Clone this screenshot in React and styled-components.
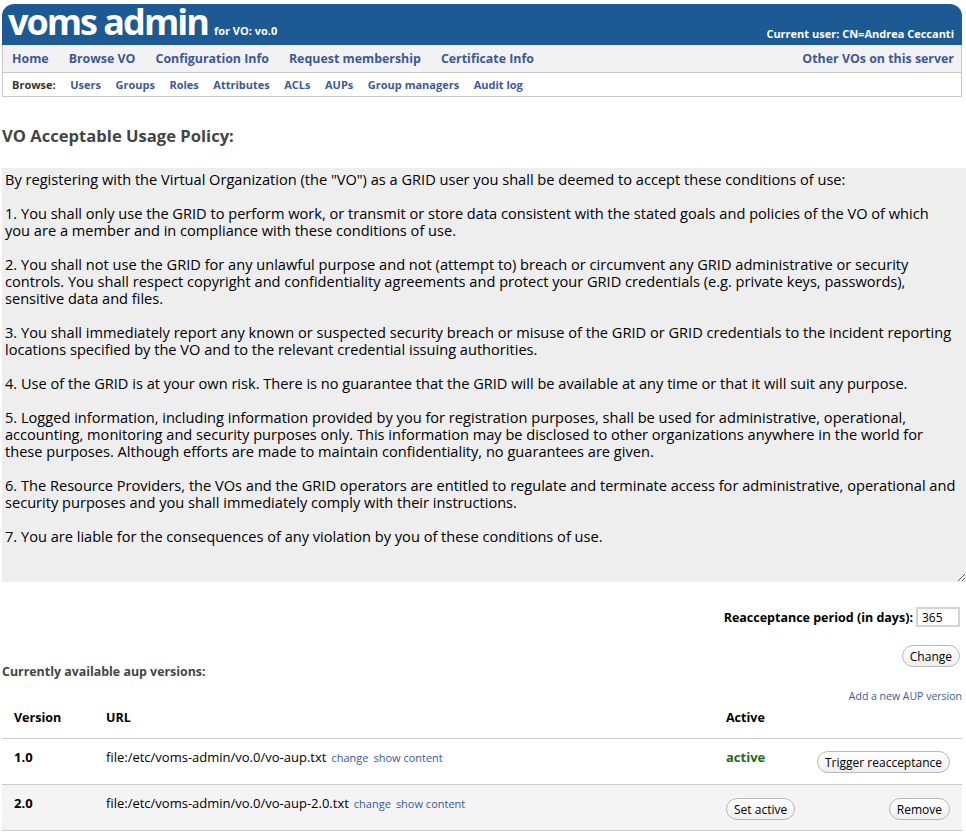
import React from 'react';
import styled, { createGlobalStyle } from 'styled-components';

const Global = createGlobalStyle`
  body{
    margin: 0;
    background: #fff;
    font-family: "Open Sans", "DejaVu Sans", sans-serif;
    color: #000;
  }
`

const policy = `By registering with the Virtual Organization (the "VO") as a GRID user you shall be deemed to accept these conditions of use:

1. You shall only use the GRID to perform work, or transmit or store data consistent with the stated goals and policies of the VO of which you are a member and in compliance with these conditions of use.

2. You shall not use the GRID for any unlawful purpose and not (attempt to) breach or circumvent any GRID administrative or security controls. You shall respect copyright and confidentiality agreements and protect your GRID credentials (e.g. private keys, passwords), sensitive data and files.

3. You shall immediately report any known or suspected security breach or misuse of the GRID or GRID credentials to the incident reporting locations specified by the VO and to the relevant credential issuing authorities.

4. Use of the GRID is at your own risk. There is no guarantee that the GRID will be available at any time or that it will suit any purpose.

5. Logged information, including information provided by you for registration purposes, shall be used for administrative, operational, accounting, monitoring and security purposes only. This information may be disclosed to other organizations anywhere in the world for these purposes. Although efforts are made to maintain confidentiality, no guarantees are given.

6. The Resource Providers, the VOs and the GRID operators are entitled to regulate and terminate access for administrative, operational and security purposes and you shall immediately comply with their instructions.

7. You are liable for the consequences of any violation by you of these conditions of use.`

const mainNav = ['Home', 'Browse VO', 'Configuration Info', 'Request membership', 'Certificate Info']
const browseNav = ['Users', 'Groups', 'Roles', 'Attributes', 'ACLs', 'AUPs', 'Group managers', 'Audit log']

const versions = [
  { v: '1.0', url: 'file:/etc/voms-admin/vo.0/vo-aup.txt', active: true },
  { v: '2.0', url: 'file:/etc/voms-admin/vo.0/vo-aup-2.0.txt', active: false },
]

export default function App(){
  return(
    <>
      <Global/>
      <Page>
        <Header>
          <Brand>voms admin<VoName>for VO: vo.0</VoName></Brand>
          <User>Current user: CN=Andrea Ceccanti</User>
        </Header>
        <NavBar>
          <NavList>
            {mainNav.map((n)=>(<NavLink key={n}>{n}</NavLink>))}
          </NavList>
          <NavLink>Other VOs on this server</NavLink>
        </NavBar>
        <SubNav>
          <SubLabel>Browse:</SubLabel>
          {browseNav.map((n)=>(<SubLink key={n}>{n}</SubLink>))}
        </SubNav>

        <Title>VO Acceptable Usage Policy:</Title>
        <Policy readOnly defaultValue={policy}/>

        <PeriodRow>
          <PeriodLabel>Reacceptance period (in days):</PeriodLabel>
          <PeriodInput defaultValue="365"/>
        </PeriodRow>
        <ChangeRow>
          <RoundButton>Change</RoundButton>
        </ChangeRow>

        <SubTitle>Currently available aup versions:</SubTitle>
        <AddRow><AddLink>Add a new AUP version</AddLink></AddRow>

        <Table>
          <colgroup>
            <col style={{ width: 92 }}/>
            <col style={{ width: 620 }}/>
            <col style={{ width: 90 }}/>
            <col/>
          </colgroup>
          <thead>
            <tr>
              <Th>Version</Th>
              <Th>URL</Th>
              <Th>Active</Th>
              <Th/>
            </tr>
          </thead>
          <tbody>
            {versions.map((r, i)=>(
              <Row key={r.v} $alt={i % 2 === 1}>
                <Td><b>{r.v}</b></Td>
                <Td>
                  <Url>{r.url}</Url>
                  <SmallLink>change</SmallLink>
                  <SmallLink>show content</SmallLink>
                </Td>
                <Td>
                  {r.active ? <Active>active</Active> : <RoundButton $top="3px">Set active</RoundButton>}
                </Td>
                <TdRight>
                  {r.active
                    ? <RoundButton $top="2px">Trigger reacceptance</RoundButton>
                    : <RoundButton $top="3px">Remove</RoundButton>}
                </TdRight>
              </Row>
            ))}
          </tbody>
        </Table>
      </Page>
    </>
  )
}

const Page = styled.div`
  padding: 4px 0 0 2px;
  width: 964px;
`

const Header = styled.div`
  width: 960px;
  height: 41px;
  background: #1d5a93;
  border-radius: 12px 12px 0 0;
  display: flex;
  justify-content: space-between;
  align-items: flex-end;
  box-sizing: border-box;
  padding: 0 8px 0 6px;
  color: #fff;
`

const Brand = styled.div`
  font-size: 36px;
  font-weight: bold;
  letter-spacing: -2px;
  line-height: 36px;
  padding-bottom: 5px;
  white-space: nowrap;
`

const VoName = styled.span`
  font-size: 11px;
  line-height: 1;
  letter-spacing: 0;
  margin-left: 6px;
`

const User = styled.div`
  font-size: 11px;
  font-weight: bold;
  line-height: 15px;
  padding-bottom: 4px;
`

const NavBar = styled.div`
  width: 960px;
  height: 28px;
  box-sizing: border-box;
  background: #f2f2f2;
  border: 1px solid #c8c8c8;
  border-top: none;
  display: flex;
  justify-content: space-between;
  align-items: center;
  padding: 0 7px 0 9px;
`

const NavList = styled.div`
  display: flex;
  gap: 20px;
`

const NavLink = styled.span`
  color: #3b5998;
  font-size: 12.4px;
  font-weight: bold;
  cursor: pointer;
`

const SubNav = styled.div`
  width: 960px;
  height: 24px;
  box-sizing: border-box;
  border: 1px solid #c8c8c8;
  border-top: none;
  display: flex;
  align-items: center;
  gap: 14.5px;
  padding: 0 9px;
  font-size: 11px;
  font-weight: bold;
`

const SubLabel = styled.span`
  color: #333;
`

const SubLink = styled.span`
  color: #3b5998;
  cursor: pointer;
`

const Title = styled.h2`
  margin: 29px 0 0 0;
  font-size: 16.6px;
  font-weight: bold;
  color: #444;
  line-height: 20px;
`

const Policy = styled.textarea`
  display: block;
  margin-top: 22px;
  width: 964px;
  height: 414px;
  box-sizing: border-box;
  border: none;
  background: #eeeeee;
  padding: 3px 10px 3px 3px;
  font-family: "Open Sans", "DejaVu Sans", sans-serif;
  font-size: 14.6px;
  line-height: 17px;
  color: #000;
  resize: both;
  overflow: hidden;
  outline: none;
`

const PeriodRow = styled.div`
  width: 958px;
  margin-top: 25px;
  display: flex;
  justify-content: flex-end;
  align-items: center;
  gap: 3px;
`

const PeriodLabel = styled.span`
  font-size: 12.5px;
  font-weight: bold;
`

const PeriodInput = styled.input`
  width: 44px;
  height: 20px;
  box-sizing: border-box;
  border: 2px solid #d4d4d4;
  font-family: "Open Sans", "DejaVu Sans", sans-serif;
  font-size: 12px;
  padding: 0 4px;
`

const ChangeRow = styled.div`
  width: 958px;
  margin-top: 18px;
  display: flex;
  justify-content: flex-end;
`

const RoundButton = styled.button`
  height: 22px;
  margin-top: ${(p)=> p.$top || '0'};
  padding: 0 7px;
  border: 1px solid #b8b8b8;
  border-radius: 11px;
  background: linear-gradient(#ffffff, #efefef);
  font-family: "Open Sans", "DejaVu Sans", sans-serif;
  font-size: 12px;
  color: #000;
  cursor: pointer;
  white-space: nowrap;
`

const SubTitle = styled.div`
  margin-top: -3px;
  font-size: 12.4px;
  font-weight: bold;
  color: #444;
  line-height: 16px;
`

const AddRow = styled.div`
  width: 960px;
  margin-top: 9px;
  display: flex;
  justify-content: flex-end;
  line-height: 14px;
`

const AddLink = styled.span`
  color: #3b5998;
  font-size: 10.5px;
  cursor: pointer;
`

const SmallLink = styled.span`
  color: #3b5998;
  font-size: 11px;
  cursor: pointer;
  margin-left: 5px;
`

const Table = styled.table`
  width: 960px;
  table-layout: fixed;
  border-collapse: collapse;
  margin-top: 1px;
`

const Th = styled.th`
  text-align: left;
  font-size: 12.5px;
  font-weight: bold;
  line-height: 16px;
  padding: 6px 12px 12px;
  border-bottom: 1px solid #cccccc;
`

const Row = styled.tr`
  background: ${(p)=> p.$alt ? '#f4f4f4' : '#fff'};
  border-bottom: 1px solid #cccccc;
  height: 46px;
`

const Td = styled.td`
  font-size: 13px;
  line-height: 16px;
  padding: 10px 12px 0;
  vertical-align: top;
  white-space: nowrap;
`

const TdRight = styled(Td)`
  text-align: right;
`

const Url = styled.span`
  font-size: 13px;
`

const Active = styled.span`
  color: #1c6b1c;
  font-weight: bold;
`
